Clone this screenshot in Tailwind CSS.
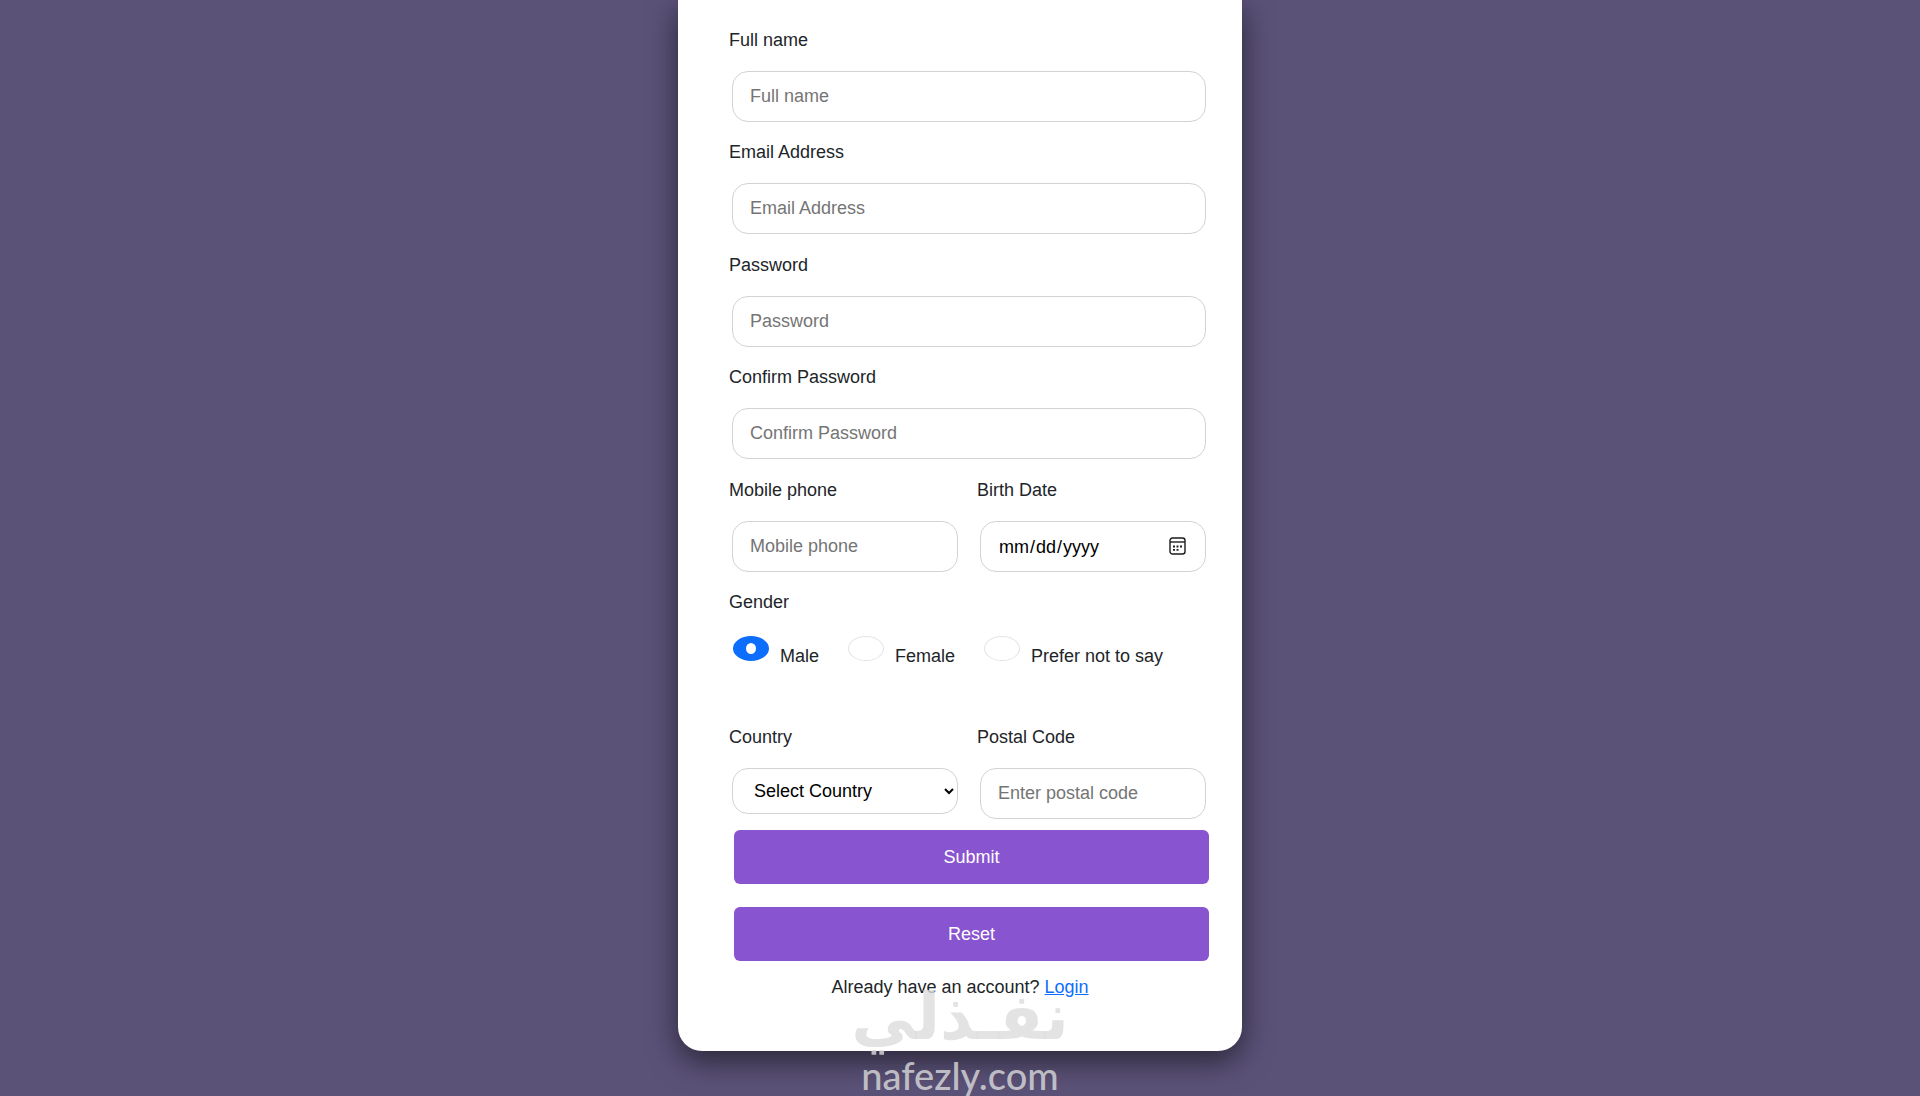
<!DOCTYPE html>
<html lang="en">
<head>
    <meta charset="UTF-8">
    <meta name="viewport" content="width=device-width, initial-scale=1.0">
    <title>Register</title>
    <script src="https://cdn.jsdelivr.net/npm/@tailwindcss/browser@4"></script>
</head>
<body class="bg-[#5b5278] min-h-screen font-['Liberation_Sans',Arial,sans-serif] text-lg text-[#212529]">
    <div class="relative">
        <div class="w-full max-w-[564px] mx-auto bg-white rounded-b-3xl pt-[26px] pl-[51px] pr-[33px] pb-[50px] shadow-[0_10px_30px_rgba(0,0,0,0.55)]">
            <form>
                <div class="flex flex-col gap-px">
                    <div>
                        <div class="h-28">
                            <label for="name" class="block">Full name</label>
                            <div class="px-[3px] pt-[17px]">
                                <input type="text" id="name" placeholder="Full name" class="block w-full h-[51px] border border-[#d3d3d3] rounded-2xl px-[17px] placeholder:text-[#757575]">
                            </div>
                        </div>
                        <div class="h-28">
                            <label for="email" class="block">Email Address</label>
                            <div class="px-[3px] pt-[17px]">
                                <input type="email" id="email" placeholder="Email Address" class="block w-full h-[51px] border border-[#d3d3d3] rounded-2xl px-[17px] placeholder:text-[#757575]">
                            </div>
                        </div>
                    </div>
                    <div>
                        <div class="h-28">
                            <label for="password" class="block">Password</label>
                            <div class="px-[3px] pt-[17px]">
                                <input type="password" id="password" placeholder="Password" class="block w-full h-[51px] border border-[#d3d3d3] rounded-2xl px-[17px] placeholder:text-[#757575]">
                            </div>
                        </div>
                        <div class="h-28">
                            <label for="confirm" class="block">Confirm Password</label>
                            <div class="px-[3px] pt-[17px]">
                                <input type="password" id="confirm" placeholder="Confirm Password" class="block w-full h-[51px] border border-[#d3d3d3] rounded-2xl px-[17px] placeholder:text-[#757575]">
                            </div>
                        </div>
                    </div>
                    <div class="h-28 grid grid-cols-2 gap-4">
                        <div>
                            <label for="phone" class="block">Mobile phone</label>
                            <div class="px-[3px] pt-[17px]">
                                <input type="tel" id="phone" placeholder="Mobile phone" class="block w-full h-[51px] border border-[#d3d3d3] rounded-2xl px-[17px] placeholder:text-[#757575]">
                            </div>
                        </div>
                        <div>
                            <label for="birth" class="block">Birth Date</label>
                            <div class="relative px-[3px] pt-[17px]">
                                <input type="date" id="birth" class="flex items-center w-full h-[51px] border border-[#d3d3d3] rounded-2xl px-[17px] text-black [&::-webkit-calendar-picker-indicator]:opacity-0 [&::-webkit-datetime-edit-fields-wrapper]:p-0">
                                <svg class="absolute right-[23px] bottom-[17px] w-[17px] h-[18px] pointer-events-none" viewBox="0 0 17 18" fill="none" stroke="#1c1c1c">
                                    <rect x="1" y="1" width="15" height="16" rx="2.500" stroke-width="1.4"/>
                                    <path d="M1 5h15" stroke-width="1.4"/>
                                    <path d="M4 9.500h2M7.500 9.500h2M11 9.500h2M4 12.800h2M7.500 12.800h2" stroke-width="1.8"/>
                                </svg>
                            </div>
                        </div>
                    </div>
                </div>

                <!-- gender -->
                <fieldset>
                    <legend>Gender</legend>
                    <div class="flex pl-[4px] pt-5 pb-[53px]">
                        <input type="radio" name="gender" id="male" checked class="appearance-none w-9 h-[25px] rounded-[50%] border border-[#e3e3e3] checked:border-x-[13px] checked:border-y-[7px] checked:border-[#0d6efd]">
                        <label for="male" class="pl-[11px] pt-[6px] w-[79px]">Male</label>
                        <input type="radio" name="gender" id="female" class="appearance-none w-9 h-[25px] rounded-[50%] border border-[#e3e3e3]">
                        <label for="female" class="pl-[11px] pt-[6px] w-[100px]">Female</label>
                        <input type="radio" name="gender" id="none" class="appearance-none w-9 h-[25px] rounded-[50%] border border-[#e3e3e3]">
                        <label for="none" class="pl-[11px] pt-[6px]">Prefer not to say</label>
                    </div>
                </fieldset>

                <div class="grid grid-cols-2 gap-4">
                    <div>
                        <label for="country" class="block">Country</label>
                        <div class="px-[3px] pt-[17px]">
                            <select id="country" class="block w-full h-[46px] border border-[#d3d3d3] rounded-2xl px-[17px] bg-white text-black">
                                <option>Select Country</option>
                            </select>
                        </div>
                    </div>
                    <div>
                        <label for="postal" class="block">Postal Code</label>
                        <div class="px-[3px] pt-[17px]">
                            <input type="text" id="postal" placeholder="Enter postal code" class="block w-full h-[51px] border border-[#d3d3d3] rounded-2xl px-[17px] placeholder:text-[#757575]">
                        </div>
                    </div>
                </div>

                <div class="flex flex-col gap-[23px] pl-[5px] pt-[11px]">
                    <button type="submit" class="h-[54px] w-full rounded-md bg-[#8854d0] text-white">Submit</button>
                    <button type="reset" class="h-[54px] w-full rounded-md bg-[#8854d0] text-white">Reset</button>
                </div>
            </form>
            <p class="text-center pt-3 pr-[18px]">Already have an account? <a href="#" class="text-[#0d6efd] underline">Login</a></p>
        </div>

        <!-- watermark -->
        <div class="absolute inset-x-0 -bottom-11 flex flex-col items-center text-[#dcdcdc]/80 pointer-events-none">
            <span lang="ar" dir="rtl" class="font-['DejaVu_Sans',sans-serif] font-bold text-[64px] leading-[76px]">نفـذلي</span>
            <span class="font-['Lato',sans-serif] font-medium text-[38px] leading-[40px]">nafezly.com</span>
        </div>
    </div>
</body>
</html>
